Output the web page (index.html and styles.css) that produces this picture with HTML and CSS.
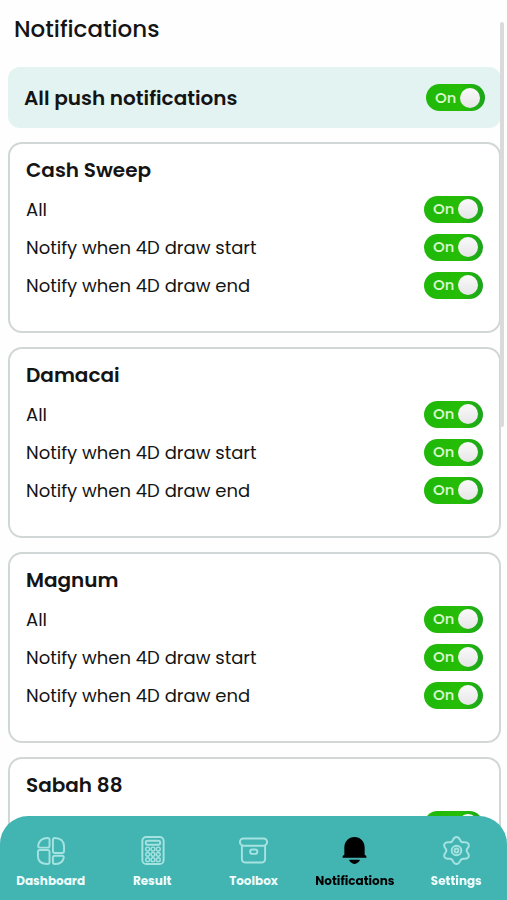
FILE: index.html
```html
<!DOCTYPE html>
<html lang="en">
<head>
<meta charset="utf-8">
<meta name="viewport" content="width=device-width, initial-scale=1">
<title>Notifications</title>
<link rel="stylesheet" href="styles.css">
</head>
<body>
<main class="page">
  <h1 class="page-title">Notifications</h1>
  <label class="banner">
    <span>All push notifications</span>
    <span class="switch"><input type="checkbox" checked><span class="state">On</span></span>
  </label>

  <section class="card">
    <h2 class="card-title">Cash Sweep</h2>
    <label class="row"><span>All</span><span class="switch"><input type="checkbox" checked><span class="state">On</span></span></label>
    <label class="row"><span>Notify when 4D draw start</span><span class="switch"><input type="checkbox" checked><span class="state">On</span></span></label>
    <label class="row"><span>Notify when 4D draw end</span><span class="switch"><input type="checkbox" checked><span class="state">On</span></span></label>
  </section>

  <section class="card">
    <h2 class="card-title">Damacai</h2>
    <label class="row"><span>All</span><span class="switch"><input type="checkbox" checked><span class="state">On</span></span></label>
    <label class="row"><span>Notify when 4D draw start</span><span class="switch"><input type="checkbox" checked><span class="state">On</span></span></label>
    <label class="row"><span>Notify when 4D draw end</span><span class="switch"><input type="checkbox" checked><span class="state">On</span></span></label>
  </section>

  <section class="card">
    <h2 class="card-title">Magnum</h2>
    <label class="row"><span>All</span><span class="switch"><input type="checkbox" checked><span class="state">On</span></span></label>
    <label class="row"><span>Notify when 4D draw start</span><span class="switch"><input type="checkbox" checked><span class="state">On</span></span></label>
    <label class="row"><span>Notify when 4D draw end</span><span class="switch"><input type="checkbox" checked><span class="state">On</span></span></label>
  </section>

  <section class="card">
    <h2 class="card-title">Sabah 88</h2>
    <label class="row"><span>All</span><span class="switch"><input type="checkbox" checked><span class="state">On</span></span></label>
  </section>
</main>
<div class="scroll-thumb"></div>

<nav class="tabs">
  <a class="tab" href="#dashboard">
    <svg class="icon" viewBox="0 0 30 30" aria-hidden="true">
      <path d="M14 4v6q0 2-2 2H4q-2 0-1.700-2C3 5 6.500 2 12 2q2 0 2 2z"/>
      <path d="M17.500 4q0-2 2-2C25.500 2 29 5.500 29 11v4.500q0 2-2 2h-7.500q-2 0-2-2z"/>
      <path d="M4 14.500h8q2 0 2 2V27q0 2-2 2C5.500 29 2 26.500 2 21v-4.500q0-2 2-2z"/>
      <path d="M19.500 20.500H27q2 0 1.700 2C28 26.500 25 29 19.500 29q-2 0-2-2v-4.500q0-2 2-2z"/>
    </svg>
    <span>Dashboard</span>
  </a>
  <a class="tab" href="#result">
    <svg class="icon" viewBox="0 0 30 30" aria-hidden="true">
      <rect x="4.500" y="1" width="22" height="28" rx="4"/>
      <rect x="8" y="5" width="15" height="4" rx="2"/>
      <g class="keys">
        <circle cx="10" cy="13.500" r="2"/><circle cx="15.500" cy="13.500" r="2"/><circle cx="21" cy="13.500" r="2"/>
        <circle cx="10" cy="19" r="2"/><circle cx="15.500" cy="19" r="2"/><circle cx="21" cy="19" r="2"/>
        <circle cx="10" cy="24.500" r="2"/><circle cx="15.500" cy="24.500" r="2"/><circle cx="21" cy="24.500" r="2"/>
      </g>
    </svg>
    <span>Result</span>
  </a>
  <a class="tab" href="#toolbox">
    <svg class="icon" viewBox="0 0 30 30" aria-hidden="true">
      <rect x="1" y="2.500" width="28" height="7.500" rx="3.500"/>
      <path d="M3 10v13.500q0 4 4 4h16q4 0 4-4V10"/>
      <rect x="11.500" y="14" width="7.500" height="4.500" rx="2.200"/>
    </svg>
    <span>Toolbox</span>
  </a>
  <a class="tab tab-active" href="#notifications" aria-current="page">
    <svg class="icon icon-solid" viewBox="0 0 30 30" aria-hidden="true">
      <path d="M4.500 19.500V12C4.500 5.500 9 1 15 1s10.500 4.500 10.500 11v7.500q2 .5 2 3H2.500q0-2.500 2-3z"/>
      <path d="M9.500 24.500h11q0 1.500-2 3Q17 29 15 29t-3.500-1.500Q9.500 26 9.500 24.500z"/>
    </svg>
    <span>Notifications</span>
  </a>
  <a class="tab" href="#settings">
    <svg class="icon" viewBox="0 0 30 30" aria-hidden="true">
      <path d="M15 1C17 1 18 2.300 18.800 4.200C19.600 6.300 20.500 6.800 22.700 6.500C25 6.200 26.300 6.500 27.300 8.100C28.300 9.900 27.700 11.300 26.400 12.800C25 14.500 25 15.500 26.400 17.200C27.700 18.700 28.300 20.100 27.300 21.900C26.300 23.500 25 23.800 22.700 23.500C20.500 23.200 19.600 23.700 18.800 25.800C18 27.700 17 29 15 29S12 27.700 11.200 25.800C10.400 23.700 9.500 23.200 7.300 23.500C5 23.800 3.700 23.500 2.700 21.900C1.700 20.100 2.300 18.700 3.600 17.200C5 15.500 5 14.500 3.600 12.800C2.300 11.300 1.700 9.900 2.700 8.100C3.700 6.500 5 6.200 7.300 6.500C9.500 6.800 10.400 6.300 11.200 4.200C12 2.300 13 1 15 1z"/>
      <circle cx="15" cy="15" r="5"/>
      <circle cx="15" cy="15" r="2"/>
    </svg>
    <span>Settings</span>
  </a>
</nav>
</body>
</html>
```
FILE: styles.css
```css
* {
  box-sizing: border-box;
}

body {
  margin: 0;
  background: #fefefe;
  color: #141414;
  font-family: Poppins, Inter, sans-serif;
  font-size: 18px;
}

.page {
  display: flex;
  flex-direction: column;
  gap: 14px;
  height: 100vh;
  padding: 14px 6px 84px 8px;
  overflow: hidden auto;
  scrollbar-width: none;
}

.page > * {
  flex-shrink: 0;
}

.page-title {
  margin: 0 6px 8px;
  font-size: 23px;
  font-weight: 500;
  line-height: 31px;
}

.banner,
.row {
  display: flex;
  align-items: center;
  justify-content: space-between;
}

.banner {
  height: 61px;
  padding: 0 16px;
  border-radius: 12px;
  background: #e3f3f2;
  font-size: 20px;
  font-weight: 600;
}

.card {
  padding: 11px 16px 27px;
  border: 2px solid #d1d7d6;
  border-radius: 14px;
  background: #fff;
}

.card-title {
  margin: 0 0 5px;
  font-size: 20px;
  font-weight: 600;
  line-height: 30px;
}

.row {
  height: 38px;
}

.switch {
  position: relative;
  display: flex;
  align-items: center;
  width: 59px;
  height: 27px;
}

.switch input {
  appearance: none;
  display: flex;
  align-items: center;
  width: 100%;
  height: 100%;
  margin: 0;
  padding: 0 5px;
  border-radius: 14px;
  background: #b5b5b5;
}

.switch input:checked {
  justify-content: flex-end;
  background: linear-gradient(90deg, #20b80a, #25bd05 60%, #1ca41c);
}

.switch input::after {
  content: "";
  width: 20px;
  height: 20px;
  border-radius: 50%;
  background: linear-gradient(#fafafa, #e6e6e6);
}

.state {
  position: absolute;
  left: 9px;
  color: #d9f7cf;
  font-family: Montserrat, Poppins, Inter, sans-serif;
  font-size: 14px;
  font-weight: 600;
  line-height: 28px;
  pointer-events: none;
}

.scroll-thumb {
  position: fixed;
  top: 22px;
  right: 3px;
  width: 4px;
  height: 45%;
  border-radius: 2px;
  background: #dadada;
}

.tabs {
  position: fixed;
  right: 0;
  bottom: 0;
  left: 0;
  display: flex;
  height: 84px;
  padding-top: 20px;
  border-radius: 28px 28px 0 0;
  background: #42b4b2;
}

.tab {
  display: flex;
  flex: 1 1 0;
  flex-direction: column;
  align-items: center;
  gap: 7px;
  color: #effcfb;
  font-size: 12px;
  font-weight: 700;
  line-height: 18px;
  text-decoration: none;
}

.tab-active {
  color: #000;
}

.icon {
  width: 29px;
  height: 29px;
  fill: none;
  stroke: #a5e3e1;
  stroke-width: 2;
  stroke-linejoin: round;
}

.keys {
  stroke-width: 1.5;
}

.icon-solid {
  fill: #000;
  stroke: none;
}
```
